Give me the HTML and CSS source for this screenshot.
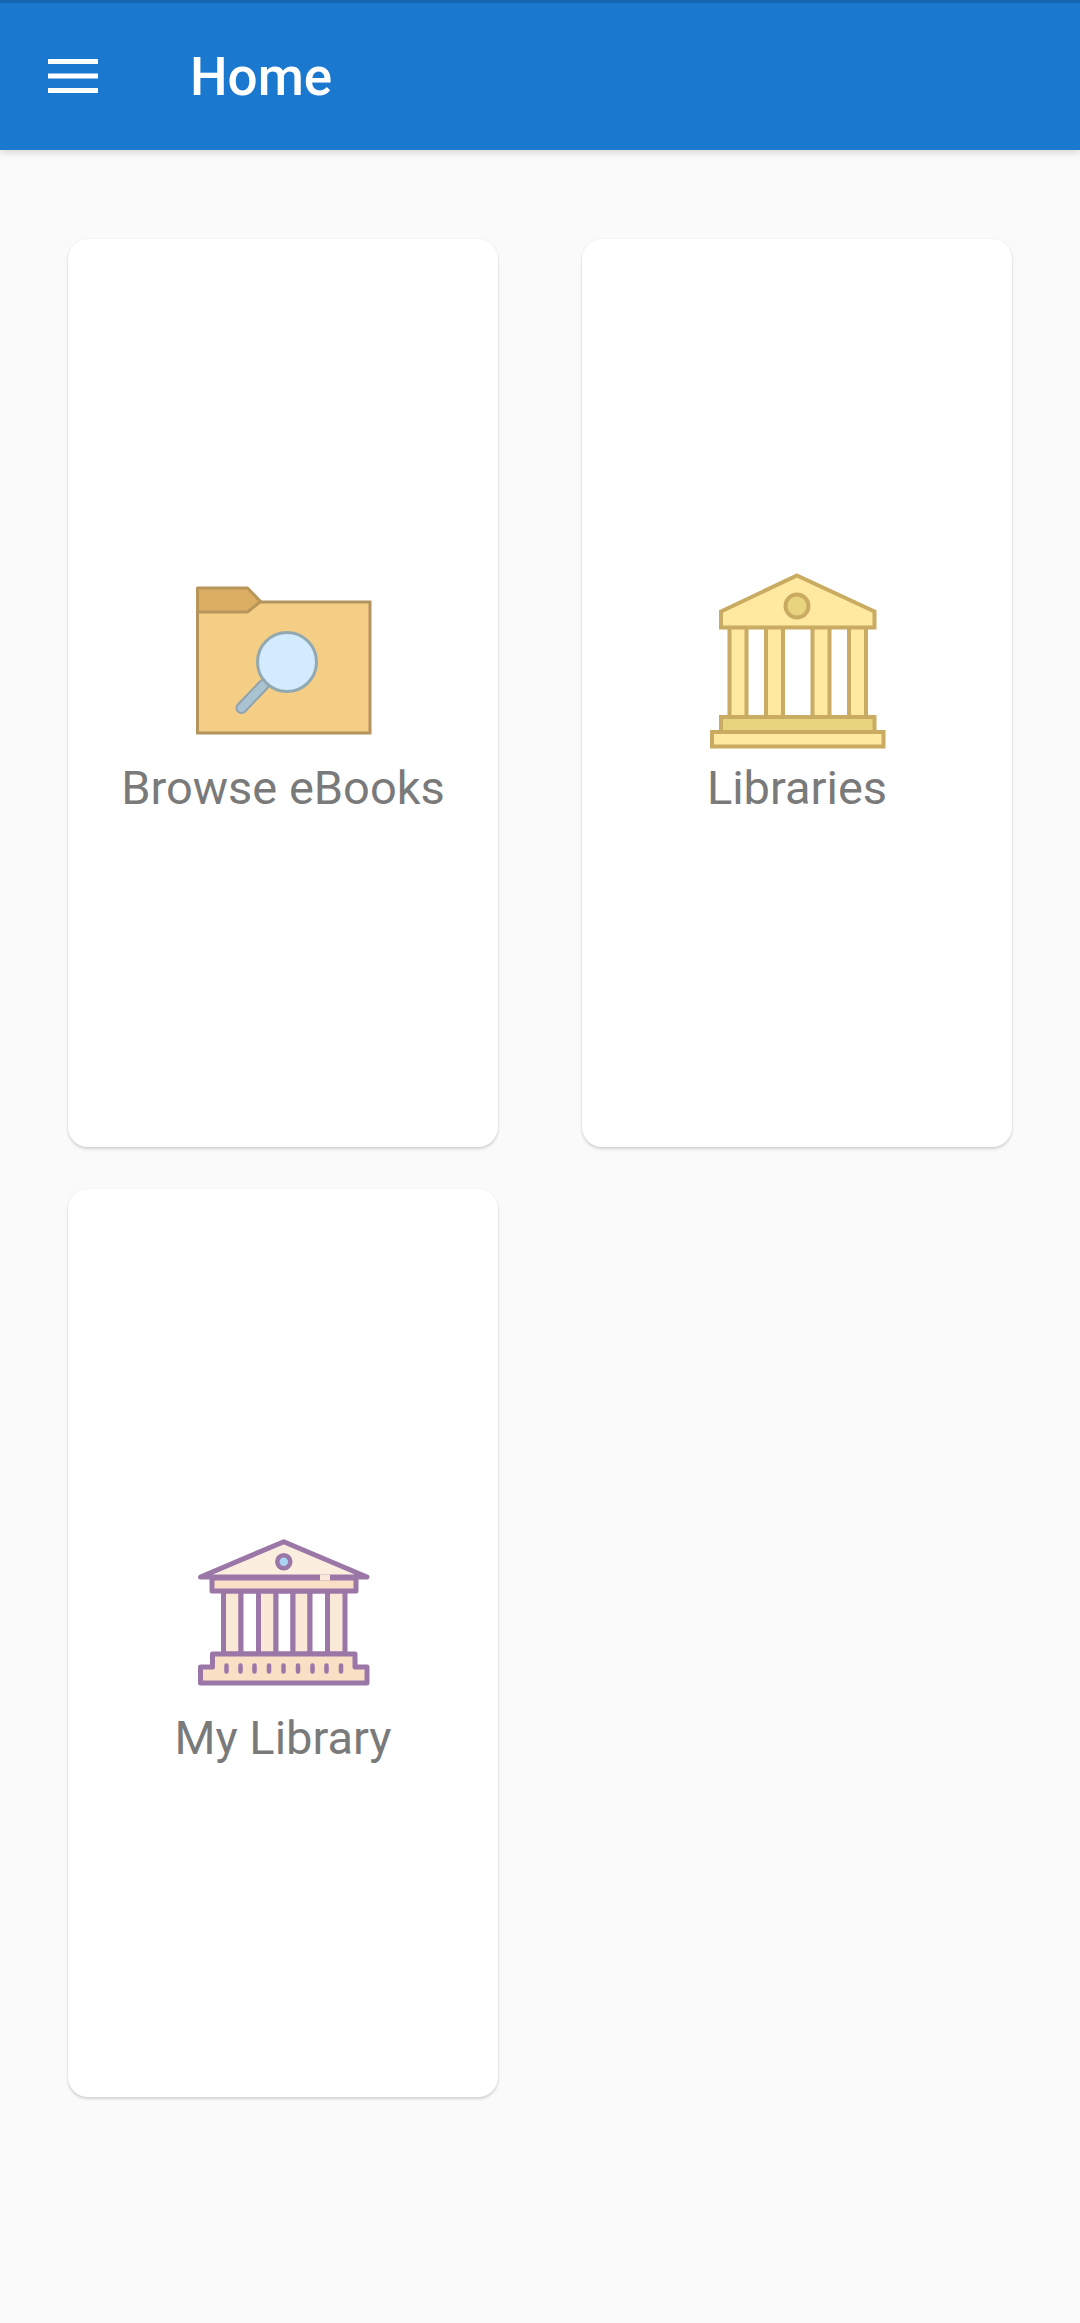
FILE: index.html
```html
<!DOCTYPE html>
<html lang="en">
<head>
<meta charset="utf-8">
<title>Home</title>
<link rel="stylesheet" href="styles.css">
</head>
<body>
<header class="appbar">
  <svg class="menu-icon" viewBox="0 0 50 34" width="50" height="34" aria-hidden="true">
    <rect x="0" y="0" width="50" height="5" fill="#fff"/>
    <rect x="0" y="14.5" width="50" height="5" fill="#fff"/>
    <rect x="0" y="29" width="50" height="5" fill="#fff"/>
  </svg>
  <h1 class="title">Home</h1>
</header>
<main class="grid">
  <section class="card">
    <svg class="icon" viewBox="0 0 189 189" aria-hidden="true">
      <rect x="8.5" y="35" width="172.5" height="131" fill="#F5CE85" stroke="#B3945F" stroke-width="3"/>
      <path d="M8.5 21H58.5L71.5 34.5L58.5 45H8.5Z" fill="#DBAE63" stroke="#B8965A" stroke-width="3" stroke-linejoin="round"/>
      <line x1="74.5" y1="118" x2="52.5" y2="141" stroke="#8FA2AD" stroke-width="12" stroke-linecap="round"/>
      <line x1="74.5" y1="118" x2="52.5" y2="141" stroke="#A9C3D2" stroke-width="8" stroke-linecap="round"/>
      <circle cx="98" cy="95" r="29.5" fill="#D2EBFF" stroke="#93A9B2" stroke-width="3"/>
    </svg>
    <span class="label">Browse eBooks</span>
  </section>
  <section class="card">
    <svg class="icon" viewBox="0 0 189 189" aria-hidden="true">
      <g stroke="#C9AC62" stroke-width="4" stroke-linejoin="miter">
        <rect x="26.5" y="60" width="17" height="90" fill="#FFE9A0"/>
        <rect x="63" y="60" width="17" height="90" fill="#FFE9A0"/>
        <rect x="109.5" y="60" width="17" height="90" fill="#FFE9A0"/>
        <rect x="146" y="60" width="17" height="90" fill="#FFE9A0"/>
        <path d="M94 8.5L171.5 44.5V60.5H18V44.5Z" fill="#FFE9A0"/>
        <circle cx="94" cy="39" r="11.5" fill="#E8D37F"/>
        <rect x="18" y="150" width="153.500" height="15" fill="#E8D37F"/>
        <rect x="9" y="165" width="171.500" height="14.5" fill="#FFE9A0"/>
      </g>
    </svg>
    <span class="label">Libraries</span>
  </section>
  <section class="card">
    <svg class="icon" viewBox="0 0 189 189" aria-hidden="true">
      <g stroke="#9B77A8" stroke-width="5" stroke-linejoin="round" stroke-linecap="round">
        <rect x="34.500" y="74" width="17.500" height="63" fill="#FBE9D8"/>
        <rect x="52" y="74" width="17.500" height="63" fill="#fff"/>
        <rect x="69.500" y="74" width="17.500" height="63" fill="#FBE9D8"/>
        <rect x="87" y="74" width="17" height="63" fill="#fff"/>
        <rect x="104" y="74" width="17" height="63" fill="#FBE9D8"/>
        <rect x="121" y="74" width="17.500" height="63" fill="#fff"/>
        <rect x="138.500" y="74" width="17.500" height="63" fill="#FBE9D8"/>
        <path d="M23 61V74H167V61Z" fill="#F9DFC4"/>
        <path d="M94.800 24.700L178 60H11.500Z" fill="#FCEEDF"/>
        <path d="M23.500 137H166V150H178V166H11.500V150H23.500Z" fill="#F9DFC4"/>
      </g>
      <path d="M131 60.500H141" stroke="#FBE9D8" stroke-width="6"/>
      <circle cx="94.800" cy="44.700" r="6.500" fill="#A9D4F2" stroke="#9B77A8" stroke-width="4.500"/>
      <path d="M37.500 148.500v6M51.500 148.500v6M65.500 148.500v6M80 148.500v6M94.500 148.500v6M109 148.500v6M123.500 148.500v6M137.500 148.500v6M152 148.500v6" stroke="#9B77A8" stroke-width="4.500" stroke-linecap="round"/>
    </svg>
    <span class="label">My Library</span>
  </section>
</main>
</body>
</html>
```

FILE: styles.css
```css
* { box-sizing: border-box; }

html, body {
  margin: 0;
  padding: 0;
  background: #fafafa;
  font-family: Roboto, "Liberation Sans", sans-serif;
}

body { min-height: 2323px; }

.appbar {
  display: flex;
  align-items: center;
  height: 150px;
  padding-left: 48px;
  background: #1a78cf;
  border-top: 3px solid #1565b0;
  box-shadow: 0 2px 8px rgba(0, 0, 0, 0.16);
}

.menu-icon {
  display: block;
  flex: none;
  margin-top: -2px;
}

.title {
  margin: 2px 0 0 92px;
  color: #fff;
  font-size: 53px;
  font-weight: 500;
  line-height: 1;
}

.grid {
  display: grid;
  grid-template-columns: 430px 430px;
  grid-auto-rows: 908px;
  column-gap: 84px;
  row-gap: 42px;
  padding: 89px 0 0 68px;
}

.card {
  display: flex;
  flex-direction: column;
  align-items: center;
  justify-content: center;
  background: #fff;
  border-radius: 20px;
  box-shadow: 0 2px 3px rgba(0, 0, 0, 0.16), 0 0 2px rgba(0, 0, 0, 0.05);
}

.icon {
  display: block;
  width: 189px;
  height: 189px;
  flex: none;
}

.label {
  color: #7a7a7a;
  font-size: 47px;
  line-height: 63px;
  white-space: nowrap;
}
```
